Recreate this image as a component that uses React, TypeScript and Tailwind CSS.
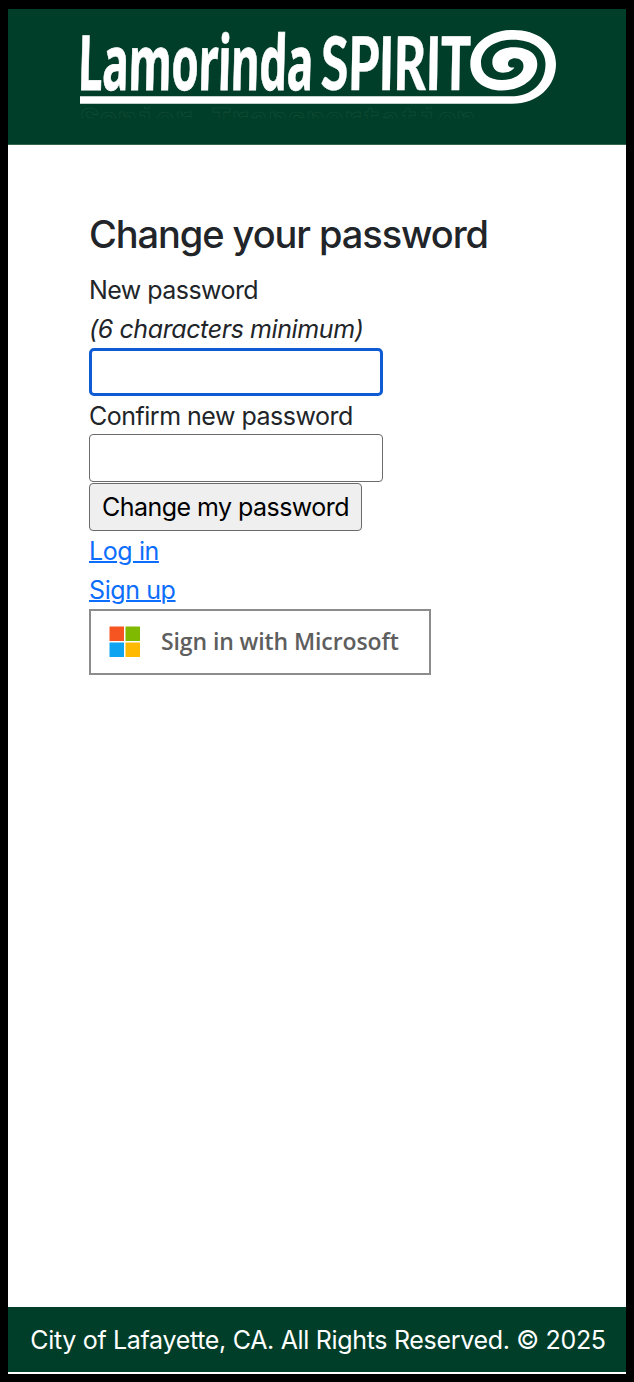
import React from "react";

function Logo() {
  return (
    <svg width="480" height="94" viewBox="78 28 480 94" overflow="visible" role="img" aria-label="Lamorinda Spirit">
      <defs>
        <clipPath id="tagline">
          <rect x="78" y="106" width="480" height="12.5" />
        </clipPath>
      </defs>
      <g fill="#fff" stroke="#fff">
        <text
          transform="translate(77.5 89.6) skewX(-1.5)"
          fontFamily="'Noto Sans', sans-serif"
          fontWeight="700"
          fontSize="76"
          strokeWidth="0.8"
          textLength="235"
          lengthAdjust="spacingAndGlyphs"
        >
          Lamorinda
        </text>
        <text
          transform="translate(320.5 89.8) skewX(-1)"
          fontFamily="Lato, sans-serif"
          fontWeight="900"
          fontSize="74"
          strokeWidth="0.3"
          textLength="149.5"
          lengthAdjust="spacingAndGlyphs"
        >
          SPIRIT
        </text>
      </g>
      <path
        fill="#fff"
        d="M80 103.8H512C538 103.8 556 86 556 64C556 43 537 30 513 30C489 30 470.3 44 470.3 64C470.3 80 484 90.5 501.7 90.5C521 90.5 537.3 79 537.3 64C537.3 53 527 47.3 513 47.3C501 47.3 492.3 53 492.3 62C492.3 69 497 72.7 503 72.7C508 72.7 512 71 514.5 67.5C511 68 508 67 508 64C508 60.5 511 58.3 515 58.3C520 58.3 523.5 61.5 523.5 66C523.5 74 514 80 502 80C489 80 481 73.5 481 63C481 49 495 39.7 513 39.7C532 39.7 545.5 49 545.5 64C545.5 83 532 96.3 511 96.3H80Z"
      />
      <text
        clipPath="url(#tagline)"
        x="80"
        y="132"
        fill="none"
        stroke="#1a4f3a"
        strokeWidth="0.6"
        fontFamily="'Liberation Mono', monospace"
        fontWeight="700"
        fontSize="36"
        textLength="395"
        lengthAdjust="spacingAndGlyphs"
      >
        Senior Transportation
      </text>
    </svg>
  );
}

function MicrosoftMark() {
  return (
    <svg width="32" height="32" viewBox="0 0 32 32" aria-hidden="true">
      <path fill="#f65420" d="M.5.5h14.5v14.5H.5z" />
      <path fill="#7fba00" d="M16.5.5H31v14.5H16.5z" />
      <path fill="#0ea4f2" d="M.5 16.5h14.5V31H.5z" />
      <path fill="#ffb900" d="M16.5 16.5H31V31H16.5z" />
    </svg>
  );
}

export default function App() {
  return (
    <div className="flex h-[1382px] w-[634px] flex-col border-x-8 border-t-[9px] border-b-8 border-black bg-white font-['Inter',sans-serif] text-[25px] leading-[39px] tracking-[-0.55px] text-[#212529]">
      <header className="h-[136px] shrink-0 border-b border-[#34654f] bg-[#003e29] pt-[19px] pl-[70px]">
        <Logo />
      </header>

      <main className="flex flex-1 flex-col items-start pt-[65px] pl-[81px]">
        <h2 className="mb-[13px] text-[38px] leading-[48px] font-medium tracking-[-1.08px] whitespace-nowrap">
          Change your password
        </h2>
        <label htmlFor="password">New password</label>
        <em className="-mb-px tracking-[-0.4px] whitespace-nowrap">(6 characters minimum)</em>
        <input
          id="password"
          type="password"
          className="h-[48px] w-[294px] rounded-[5px] border-[3px] border-[#0f5bd3] outline-none"
        />
        <label htmlFor="confirmation" className="pt-[2px] leading-[36px] tracking-[-0.5px]">Confirm new password</label>
        <input
          id="confirmation"
          type="password"
          className="h-[48px] w-[294px] rounded-[4px] border-[1.5px] border-[#6b6b6b] outline-none"
        />
        <button className="mt-px h-[48px] w-[273px] rounded-[4px] border-[1.5px] border-[#6b6b6b] bg-[#efefef] whitespace-nowrap text-black">
          Change my password
        </button>
        <a href="#login" className="mt-px tracking-[-0.4px] text-[#0d6efd] underline decoration-2">Log in</a>
        <a href="#signup" className="-mb-px tracking-[-0.4px] text-[#0d6efd] underline decoration-2">Sign up</a>
        <button className="flex h-[66px] w-[342px] items-center gap-[20px] border-2 border-[#8c8c8c] pl-[18px] font-['Open_Sans',sans-serif] text-[23px] font-semibold tracking-[-0.1px] whitespace-nowrap text-[#5e5e5e]">
          <MicrosoftMark />
          <span className="-mt-px">Sign in with Microsoft</span>
        </button>
      </main>

      <footer className="h-[65px] shrink-0 bg-[#003e29] pt-px pl-[2px] text-center leading-[65px] tracking-[-0.32px] whitespace-nowrap text-white">
        City of Lafayette, CA. All Rights Reserved. © 2025
      </footer>
      <div className="h-[2px] shrink-0 bg-white" />
    </div>
  );
}
